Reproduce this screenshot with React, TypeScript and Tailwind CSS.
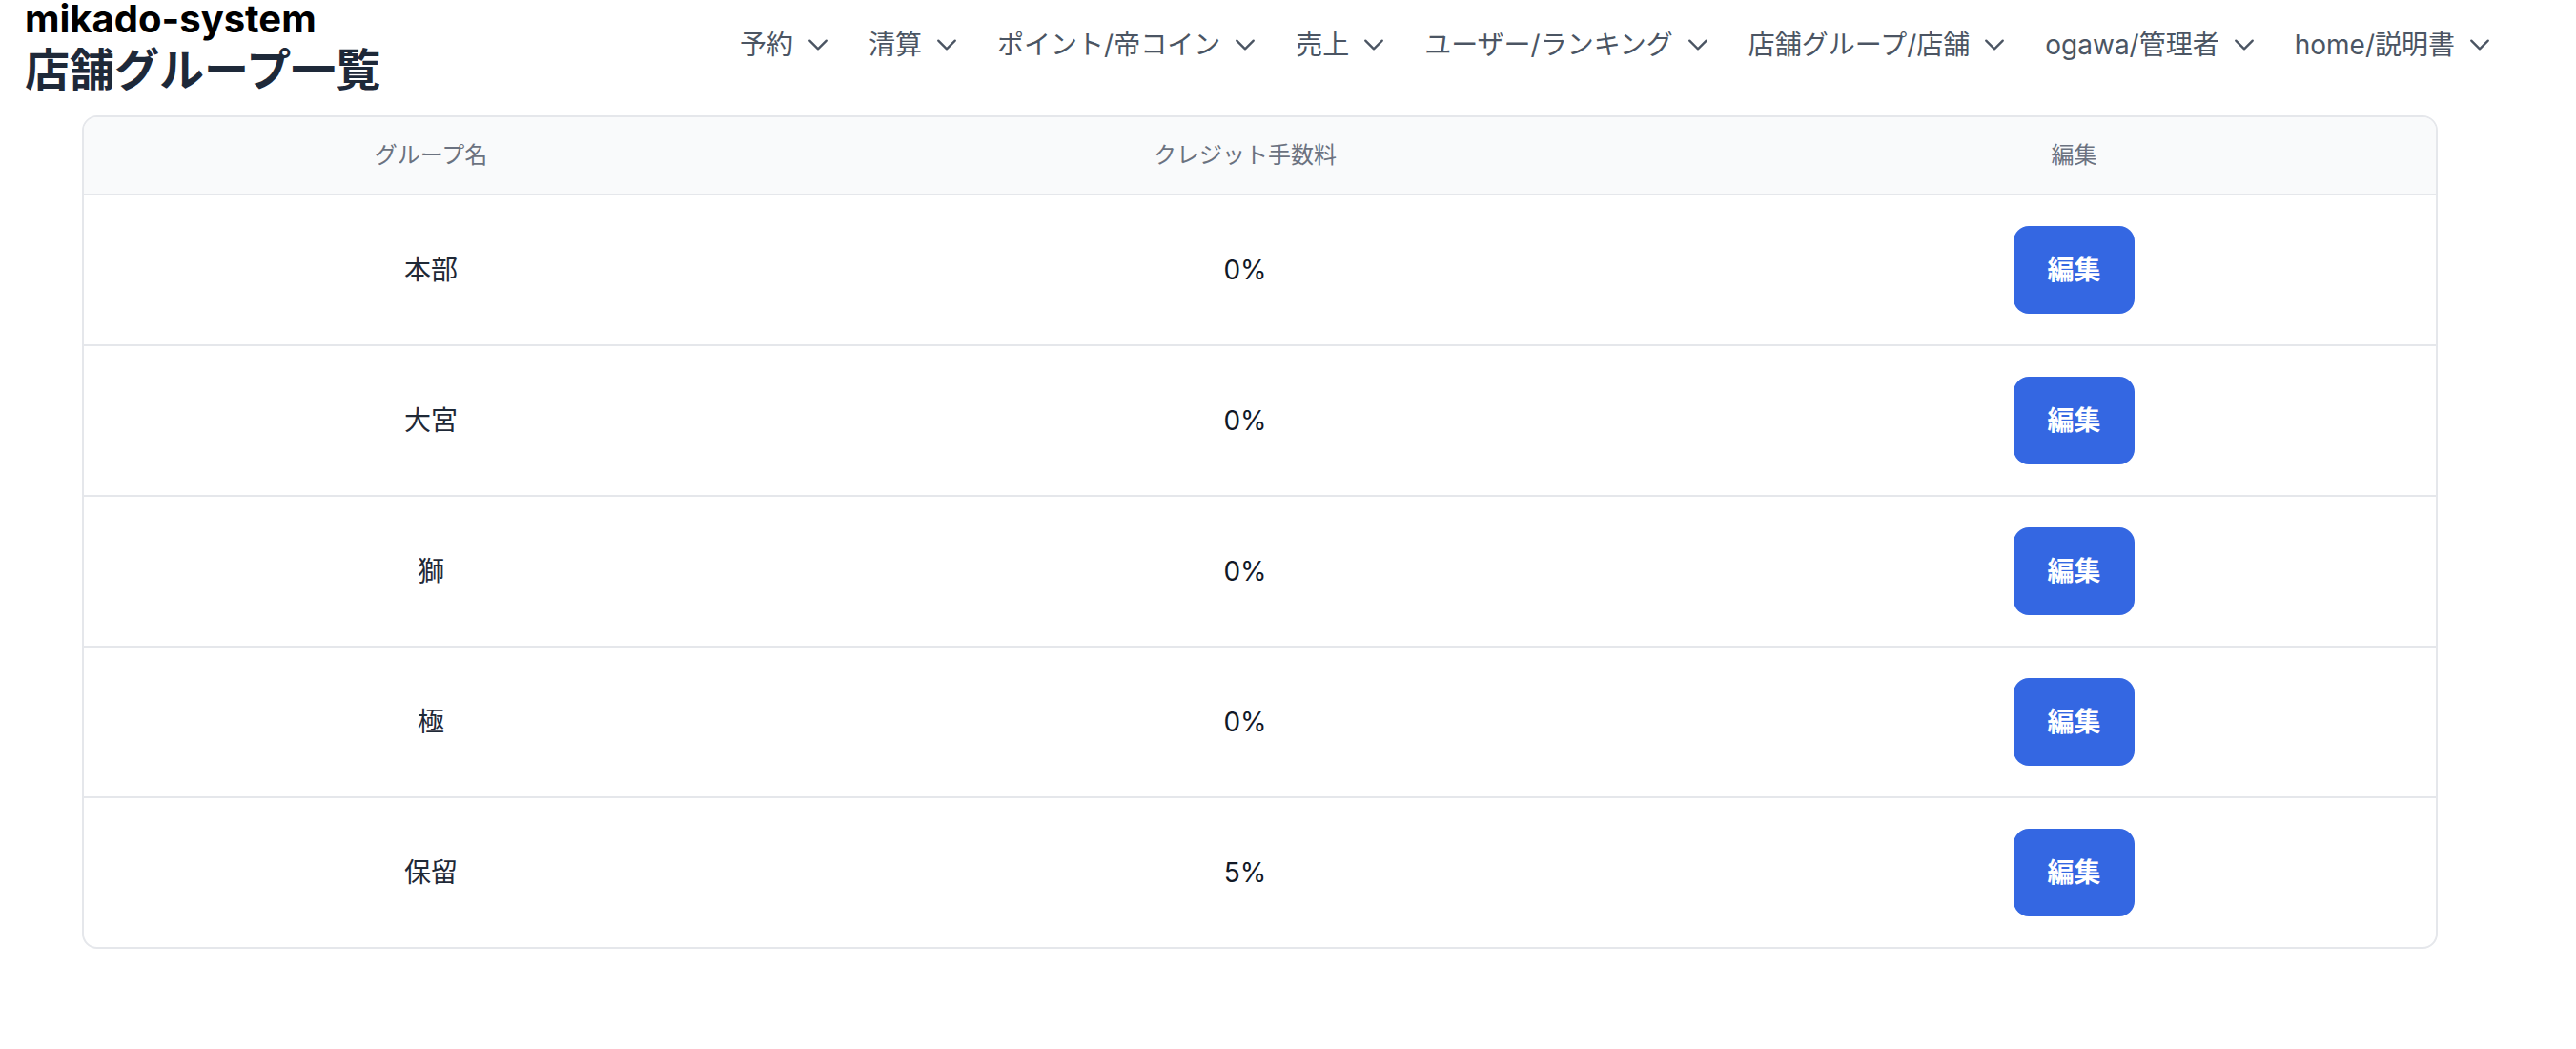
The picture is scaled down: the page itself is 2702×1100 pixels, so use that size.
const navItems = [
  '予約',
  '清算',
  'ポイント/帝コイン',
  '売上',
  'ユーザー/ランキング',
  '店舗グループ/店舗',
  'ogawa/管理者',
  'home/説明書',
]

const groups = [
  { name: '本部', fee: '0%' },
  { name: '大宮', fee: '0%' },
  { name: '獅', fee: '0%' },
  { name: '極', fee: '0%' },
  { name: '保留', fee: '5%' },
]

function Chevron() {
  return (
    <svg
      width="28"
      height="28"
      viewBox="0 0 24 24"
      fill="none"
      stroke="currentColor"
      strokeWidth={2}
      strokeLinecap="round"
      strokeLinejoin="round"
    >
      <path d="m19.5 8.25-7.5 7.5-7.5-7.5" />
    </svg>
  )
}

export default function App() {
  return (
    <div
      className="min-h-[1100px] w-[2702px] bg-white"
      style={{ fontFamily: 'Inter, "Noto Sans CJK JP", sans-serif' }}
    >
      <header className="flex items-start justify-between pl-[26px] pr-[87px]">
        <div>
          <div className="text-[40px] font-bold leading-[40px] text-black">mikado-system</div>
          <h1 className="mt-[1px] text-[47px] font-bold leading-[64px] text-gray-800">店舗グループ一覧</h1>
        </div>
        <nav className="flex h-[94px] items-center gap-[39px]">
          {navItems.map((item) => (
            <button key={item} className="flex items-center gap-[12px] text-[28px] leading-[40px] text-[#4b5563]">
              <span>{item}</span>
              <Chevron />
            </button>
          ))}
        </nav>
      </header>

      <div className="ml-[86px] mt-[16px] w-[2471px] overflow-hidden rounded-[16px] border-2 border-[#e5e7eb]">
        <table className="w-full table-fixed border-collapse">
          <thead className="bg-[#f9fafb]">
            <tr className="border-b-2 border-[#e5e7eb]">
              <th className="w-[728px] py-[24px] text-[24px] font-normal leading-[32px] text-[#6b7280]">グループ名</th>
              <th className="w-[980px] py-[24px] text-[24px] font-normal leading-[32px] text-[#6b7280]">クレジット手数料</th>
              <th className="py-[24px] text-[24px] font-normal leading-[32px] text-[#6b7280]">編集</th>
            </tr>
          </thead>
          <tbody>
            {groups.map((g, i) => (
              <tr key={g.name} className={i < groups.length - 1 ? 'border-b-2 border-[#e5e7eb]' : ''}>
                <td className="py-[32px] text-center text-[28px] leading-[40px] text-[#1f2937]">{g.name}</td>
                <td className="py-[32px] text-center text-[28px] leading-[40px] text-[#111827]">{g.fee}</td>
                <td className="py-[32px] text-center">
                  <button className="rounded-[16px] bg-[#3467e2] px-[35px] py-[25px] text-[28px] font-bold leading-[42px] text-white">
                    編集
                  </button>
                </td>
              </tr>
            ))}
          </tbody>
        </table>
      </div>
    </div>
  )
}
